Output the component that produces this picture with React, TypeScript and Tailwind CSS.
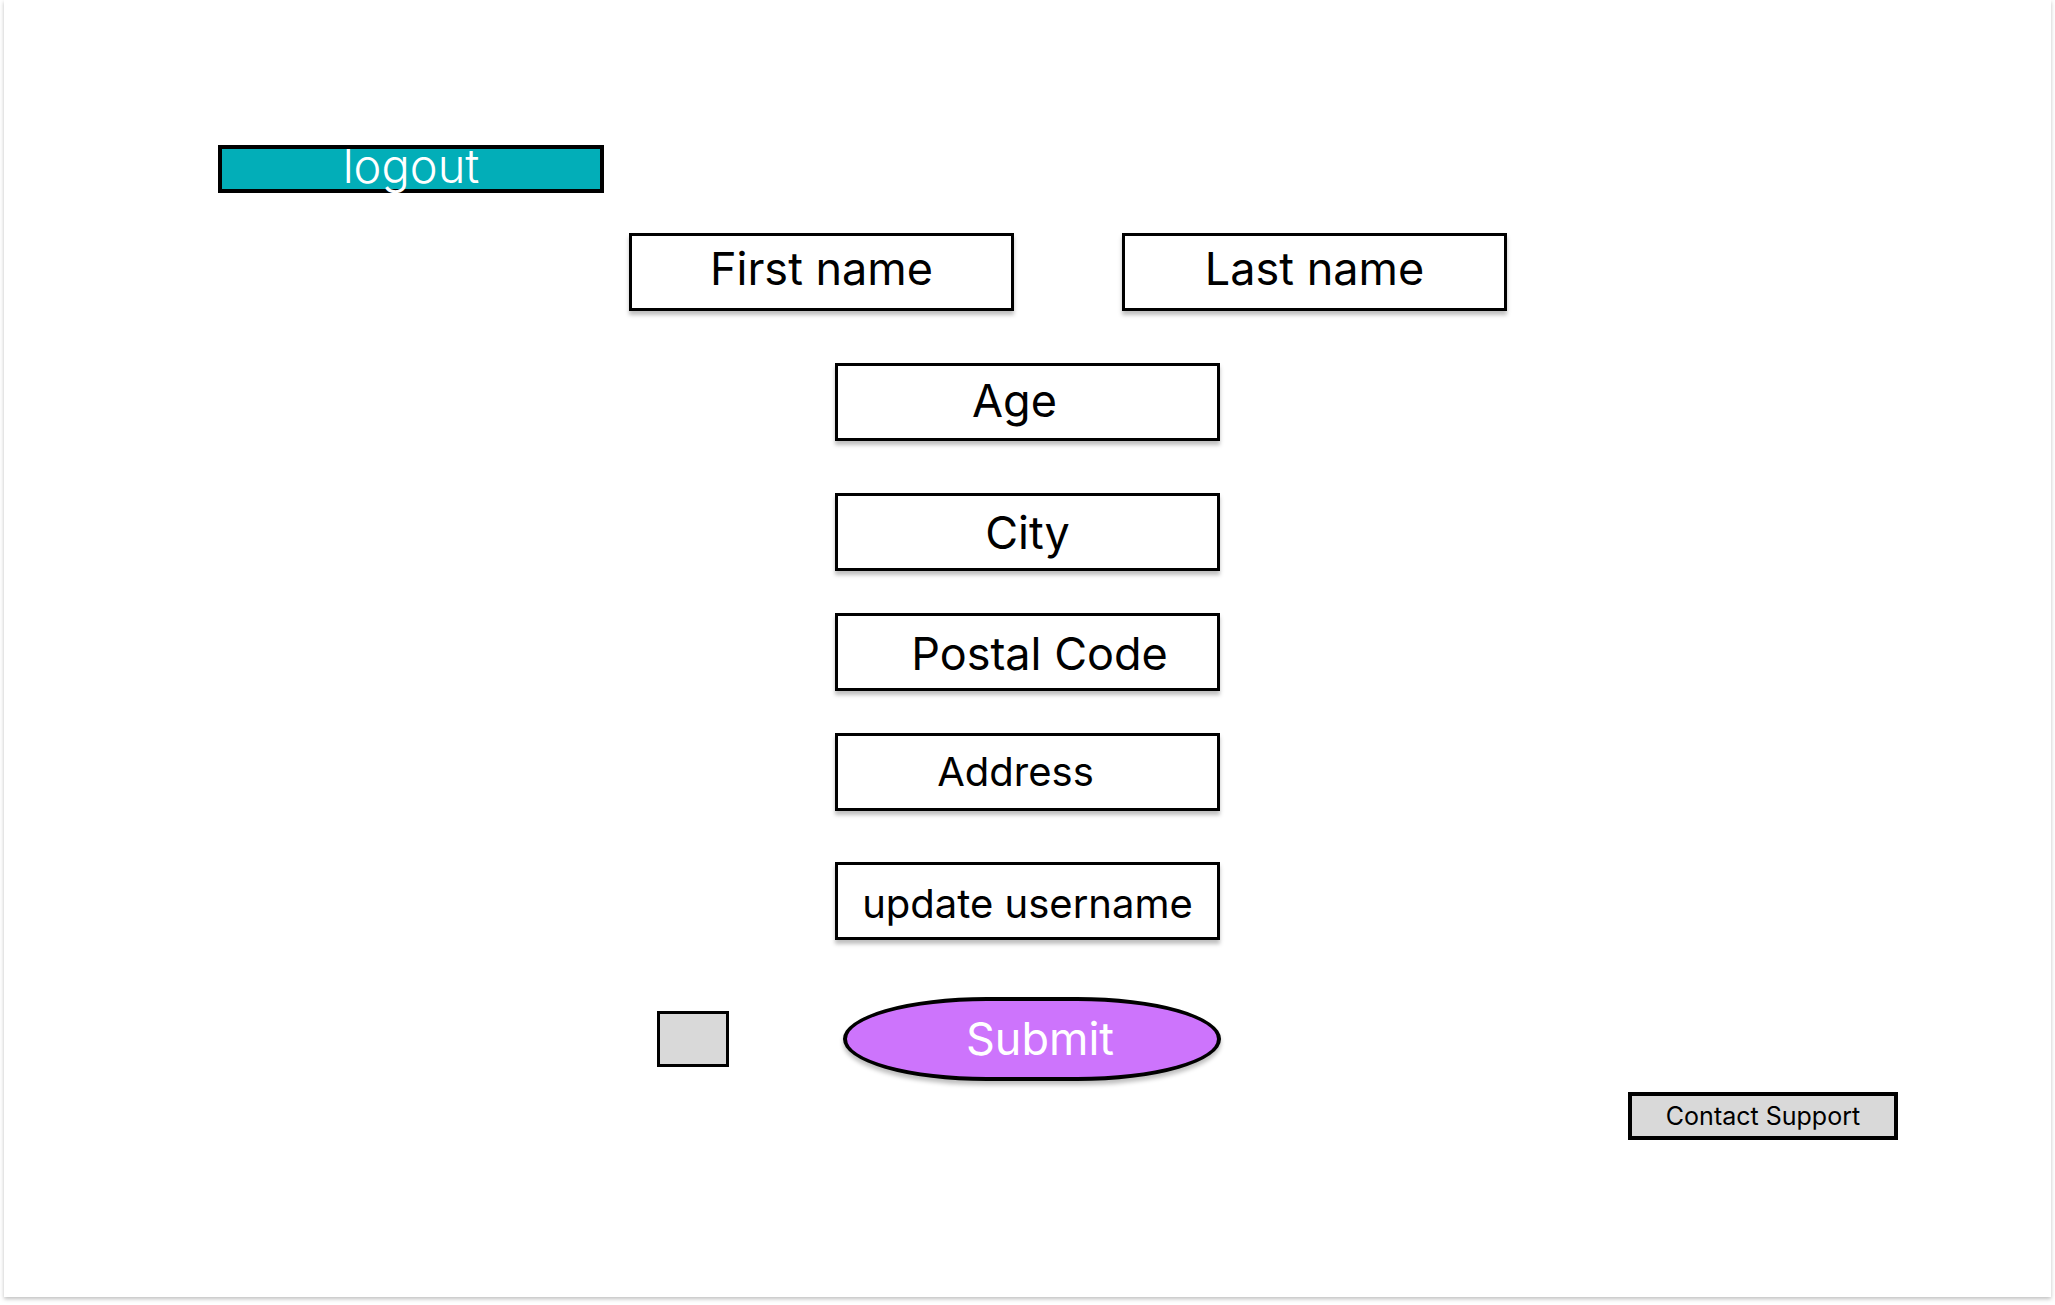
import React from 'react';

const font = { fontFamily: 'Inter, "Noto Sans", sans-serif' };

interface FieldProps {
  label: string;
  className?: string;
  textClass?: string;
}

function Field({ label, className = '', textClass = 'text-[45px]' }: FieldProps) {
  return (
    <div
      className={`flex items-center justify-center w-[385px] h-[78px] bg-white border-[3px] border-black shadow-[0_4px_4px_rgba(0,0,0,0.25)] ${className}`}
    >
      <span className={`leading-none text-black ${textClass}`}>{label}</span>
    </div>
  );
}

export default function App() {
  return (
    <div className="w-[2055px] h-[1305px] bg-white overflow-hidden" style={font}>
      <div className="ml-[4px] w-[2047px] h-[1297px] bg-white shadow-[0_2px_4px_rgba(0,0,0,0.25)] flex flex-col">
        {/* logout */}
        <div className="mt-[145px] ml-[214px]">
          <button className="flex items-center justify-center w-[386px] h-[48px] bg-[#02aeb8] border-[4px] border-black">
            <span className="text-[47px] font-light leading-none text-white -mt-[7px]">logout</span>
          </button>
        </div>

        {/* names */}
        <div className="mt-[40px] ml-[625px] flex gap-[108px]">
          <Field label="First name" textClass="text-[45px] -mt-[7px]" />
          <Field label="Last name" textClass="text-[45px] -mt-[7px]" />
        </div>

        {/* stacked fields */}
        <div className="ml-[831px] flex flex-col">
          <Field label="Age" className="mt-[52px]" textClass="text-[45px] -ml-[26px] -mt-[4px]" />
          <Field label="City" className="mt-[52px]" />
          <Field label="Postal Code" className="mt-[42px]" textClass="text-[45px] ml-[24px] mt-[3px]" />
          <Field label="Address" className="mt-[42px]" textClass="text-[40px] -ml-[24px]" />
          <Field label="update username" className="mt-[51px]" textClass="text-[40px] mt-[6px]" />
        </div>

        {/* submit row */}
        <div className="mt-[57px] ml-[653px] flex items-center">
          <div className="w-[72px] h-[56px] bg-[#d9d9d9] border-[3px] border-black" />
          <button className="ml-[114px] flex items-center justify-center w-[378px] h-[84px] bg-[#cd74fc] border-[4px] border-black rounded-[38%/50%] shadow-[0_4px_4px_rgba(0,0,0,0.25)]">
            <span className="text-[45px] leading-none text-white ml-[16px] -mt-[1px]">Submit</span>
          </button>
        </div>

        {/* contact support */}
        <div className="mt-[11px] ml-[1624px]">
          <button className="flex items-center justify-center w-[270px] h-[48px] bg-[#d9d9d9] border-[4px] border-black">
            <span className="text-[25px] leading-none text-black">Contact Support</span>
          </button>
        </div>
      </div>
    </div>
  );
}
